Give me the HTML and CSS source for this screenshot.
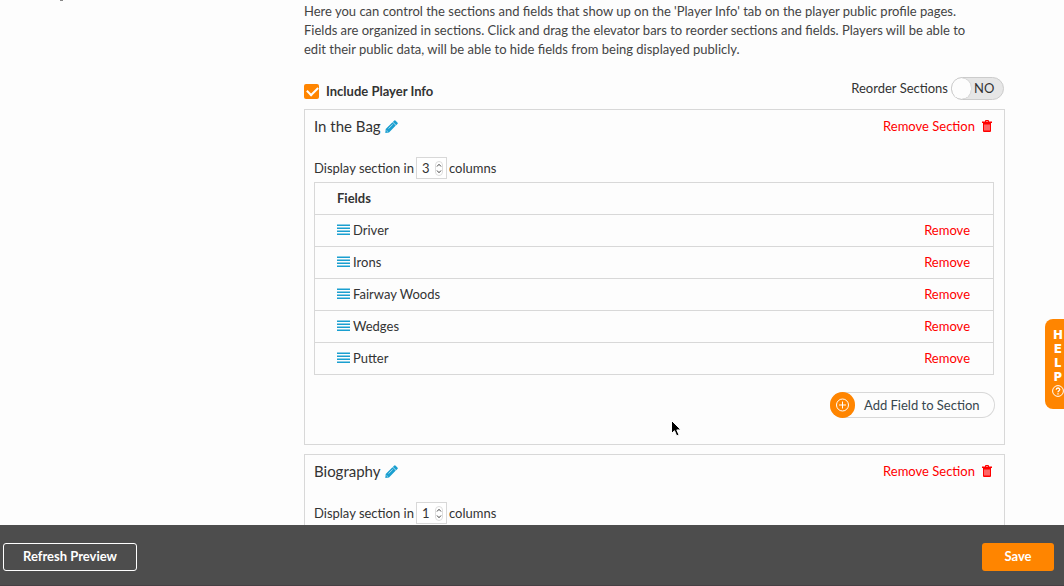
FILE: index.html
```html
<!DOCTYPE html>
<html lang="en">
<head>
    <meta charset="UTF-8">
    <meta name="viewport" content="width=device-width, initial-scale=1.0">
    <title>Player Info</title>
    <link rel="stylesheet" href="styles.css">
</head>
<body>

<svg class="sprite" width="0" height="0" aria-hidden="true">
    <symbol id="pencil" viewBox="0 0 13 13">
        <path d="M9 .7a1.200 1.200 0 0 1 1.700 0l1.700 1.700a1.200 1.200 0 0 1 0 1.700L11.200 5.200 7.900 1.900z"/>
        <path fill-rule="evenodd" d="M7.500 2.300l3.300 3.300-6.800 6.800L.3 12.900.7 9.100zM7.500 4.200L3.300 8.400l.4.4L7.900 4.600zM1.700 10.200l-.1.900.5.5.9-.1z"/>
    </symbol>
    <symbol id="trash" viewBox="0 0 10 12">
        <path fill-rule="evenodd" d="M3 1.500V.9C3 .4 3.400 0 3.900 0h2.200c.5 0 .9.4.9.9v.6h3V3H0V1.500zM4 1.500h2V1H4zM1 3h8v8a1 1 0 0 1-1 1H2a1 1 0 0 1-1-1zM2.600 4.500v6h.8v-6zM4.600 4.500v6h.8v-6zM6.600 4.500v6h.8v-6z"/>
    </symbol>
    <symbol id="bars" viewBox="0 0 13 12">
        <path d="M0 .5h13v1.500H0zM0 3.500h13v1.500H0zM0 6.500h13v1.500H0zM0 9.500h13v1.500H0z"/>
    </symbol>
    <symbol id="stepper" viewBox="0 0 8 15">
        <rect x=".5" y=".5" width="7" height="14" rx="3.500" fill="#fff" stroke="#ddd"/>
        <path d="M2 5.500l2-2.200 2 2.200M2 9.500l2 2.200 2-2.200" fill="none" stroke="#444"/>
    </symbol>
</svg>

<main class="content">
    <span class="mark"></span>
    <p class="intro">Here you can control the sections and fields that show up on the 'Player Info' tab on the player public profile pages.<br>
    Fields are organized in sections. Click and drag the elevator bars to reorder sections and fields. Players will be able to<br>
    edit their public data, will be able to hide fields from being displayed publicly.</p>

    <div class="options">
        <label class="include"><input type="checkbox" checked> Include Player Info</label>
        <label class="reorder">Reorder Sections
            <span class="switch"><input type="checkbox"><span>NO</span></span>
        </label>
    </div>

    <section class="panel">
        <div class="panel-head">
            <h2>In the Bag</h2>
            <button class="edit" aria-label="Edit In the Bag"><svg width="13" height="13"><use href="#pencil"/></svg></button>
            <button class="remove remove-section">Remove Section <svg width="10" height="12"><use href="#trash"/></svg></button>
        </div>
        <div class="columns">
            <label for="bag-columns">Display section in</label>
            <span class="number"><input type="number" id="bag-columns" value="3"><svg width="8" height="15"><use href="#stepper"/></svg></span>
            <span>columns</span>
        </div>
        <table class="fields">
            <thead>
                <tr><th colspan="2">Fields</th></tr>
            </thead>
            <tbody>
                <tr>
                    <td><svg width="13" height="12"><use href="#bars"/></svg>Driver</td>
                    <td><button class="remove">Remove</button></td>
                </tr>
                <tr>
                    <td><svg width="13" height="12"><use href="#bars"/></svg>Irons</td>
                    <td><button class="remove">Remove</button></td>
                </tr>
                <tr>
                    <td><svg width="13" height="12"><use href="#bars"/></svg>Fairway Woods</td>
                    <td><button class="remove">Remove</button></td>
                </tr>
                <tr>
                    <td><svg width="13" height="12"><use href="#bars"/></svg>Wedges</td>
                    <td><button class="remove">Remove</button></td>
                </tr>
                <tr>
                    <td><svg width="13" height="12"><use href="#bars"/></svg>Putter</td>
                    <td><button class="remove">Remove</button></td>
                </tr>
            </tbody>
        </table>
        <button class="add-field">
            <svg width="25" height="26" viewBox="0 0 25 26">
                <rect width="25" height="26" rx="12.500" fill="#ff8500"/>
                <circle cx="12.500" cy="13" r="6" fill="none" stroke="#fff"/>
                <path d="M9 13h7M12.500 9.500v7" stroke="#fff"/>
            </svg>
            <span>Add Field to Section</span>
        </button>
    </section>

    <section class="panel">
        <div class="panel-head">
            <h2>Biography</h2>
            <button class="edit" aria-label="Edit Biography"><svg width="13" height="13"><use href="#pencil"/></svg></button>
            <button class="remove remove-section">Remove Section <svg width="10" height="12"><use href="#trash"/></svg></button>
        </div>
        <div class="columns">
            <label for="bio-columns">Display section in</label>
            <span class="number"><input type="number" id="bio-columns" value="1"><svg width="8" height="15"><use href="#stepper"/></svg></span>
            <span>columns</span>
        </div>
    </section>
</main>

<footer class="actions">
    <button class="btn btn-outline">Refresh Preview</button>
    <button class="btn btn-primary">Save</button>
</footer>

<button class="help">
    <span>H</span><span>E</span><span>L</span><span>P</span>
    <svg width="12" height="12" viewBox="0 0 12 12" fill="none" stroke="#fff">
        <circle cx="6" cy="6" r="5.400"/>
        <path d="M4.200 4.800c0-2.400 3.600-2.300 3.600-.2C7.800 5.800 6 5.800 6 7.300M6 8.300v1.200" stroke-width="1.300"/>
    </svg>
</button>

<svg class="cursor" width="12" height="19" viewBox="0 0 12 19" aria-hidden="true">
    <path d="M1.500 1.500v13l3-2.800 2.200 5.200 2.300-1-2.200-5H11z" fill="#000" stroke="#fff"/>
</svg>

</body>
</html>
```

FILE: styles.css
```css
* {
    box-sizing: border-box;
}
body {
    display: flex;
    flex-direction: column;
    height: 100vh;
    margin: 0;
    overflow: hidden;
    font-family: Lato, sans-serif;
    font-size: 13px;
    line-height: 19px;
    color: #333;
    background: #fdfdfd;
}
button, input {
    font: inherit;
    color: inherit;
}
button {
    padding: 0;
    border: 0;
    background: none;
    cursor: pointer;
}
.sprite {
    position: absolute;
}
.content {
    flex: 1;
    min-height: 0;
    overflow: hidden;
    padding: 2px 59px 0 304px;
}
.mark {
    position: absolute;
    top: 0;
    left: 60px;
    width: 3px;
    height: 1px;
    background: #888;
}
.intro {
    margin: 0;
    color: #444;
}

/* Options above the sections */
.options {
    display: flex;
    justify-content: space-between;
    align-items: center;
    height: 24px;
    margin: 17px 0 9px;
}
.include {
    display: flex;
    align-items: center;
    gap: 7px;
    padding-top: 6px;
    font-weight: bold;
}
.include input {
    appearance: none;
    width: 15px;
    height: 15px;
    margin: 0;
    border-radius: 2px;
    background: #ff8500;
}
.include input:checked::before {
    content: "";
    display: block;
    width: 9px;
    height: 5px;
    margin: 4px 3px;
    border: solid #fff;
    border-width: 0 0 2px 2px;
    transform: rotate(-45deg) translate(1px, -1px);
}
.reorder {
    display: flex;
    align-items: center;
    gap: 3px;
}
.switch {
    display: flex;
    align-items: center;
    width: 53px;
    height: 23px;
    margin-right: 1px;
    border: 1px solid #ccc;
    border-radius: 12px;
    background: #e6e6e6;
}
.switch input {
    appearance: none;
    width: 19px;
    height: 21px;
    margin: 0 3px 0 0;
    border-radius: 10px;
    background: #fdfdfd;
    box-shadow: 0 0 1px #999;
}

/* Sections */
.panel {
    margin-bottom: 9px;
    padding: 6px 10px 26px 9px;
    border: 1px solid #d8d8d8;
}
.panel-head {
    display: flex;
    align-items: center;
    height: 20px;
    margin-bottom: 21px;
}
.panel-head h2 {
    margin: 0 4px 0 0;
    font-size: 15px;
    font-weight: normal;
}
.panel svg {
    display: block;
}
.edit {
    color: #1a9fd0;
    fill: currentColor;
}
.remove {
    color: #f00;
    fill: currentColor;
}
.remove-section {
    display: flex;
    align-items: center;
    gap: 7px;
    margin-left: auto;
    margin-right: 2px;
}
.columns {
    display: flex;
    align-items: center;
    gap: 2px;
    margin-bottom: 3px;
}
.number {
    display: flex;
    align-items: center;
    width: 31px;
    height: 22px;
    padding-left: 5px;
    border: 1px solid #d8d8d8;
    background: #fff;
}
.number input {
    appearance: textfield;
    width: 13px;
    padding: 0;
    border: 0;
    background: none;
}
.number input::-webkit-inner-spin-button {
    appearance: none;
    margin: 0;
}
.fields {
    width: 100%;
    border-collapse: collapse;
    border: 1px solid #d8d8d8;
}
.fields tr {
    height: 32px;
    border-bottom: 1px solid #d8d8d8;
}
.fields th, .fields td {
    padding: 0 23px 0 22px;
    text-align: left;
}
.fields td:last-child {
    text-align: right;
}
.fields svg {
    display: inline-block;
    margin-right: 3px;
    vertical-align: -1px;
    fill: #1a9fd0;
}
.add-field {
    display: flex;
    align-items: center;
    gap: 9px;
    width: 165px;
    height: 26px;
    margin: 17px -1px 0 auto;
    border-radius: 13px;
    box-shadow: inset 0 0 0 1px #d8d8d8;
    color: #37474f;
}

/* Bottom bar */
.actions {
    display: flex;
    justify-content: space-between;
    align-items: center;
    height: 61px;
    padding: 3px 10px 0 3px;
    border-bottom: 1px solid #464044;
    background: #4d4d4d;
}
.btn {
    height: 28px;
    border-radius: 3px;
    font-weight: bold;
    color: #fff;
}
.btn-outline {
    width: 134px;
    border: 1px solid #fff;
}
.btn-primary {
    width: 72px;
    background: #ff8500;
}

.help {
    position: fixed;
    top: 319px;
    right: -7px;
    display: flex;
    flex-direction: column;
    align-items: center;
    width: 26px;
    height: 90px;
    padding-top: 9px;
    border-radius: 8px 0 0 8px;
    background: #ff8500;
    color: #fff;
    font-family: Inter, sans-serif;
    font-size: 12px;
    font-weight: 900;
    line-height: 14px;
}
.help svg {
    margin-top: 1px;
}
.cursor {
    position: absolute;
    top: 419px;
    left: 670px;
}
```
